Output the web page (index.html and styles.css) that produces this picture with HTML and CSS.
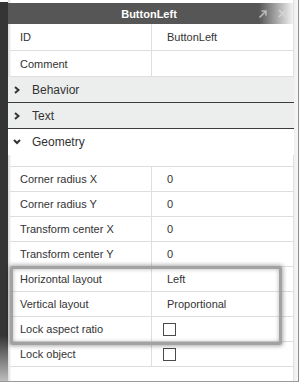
FILE: index.html
```html
<!DOCTYPE html>
<html lang="en">

<head>
    <meta charset="UTF-8">
    <title>ButtonLeft</title>
    <link rel="stylesheet" href="styles.css">
</head>

<body>
    <div class="window">
        <div class="sidebar"></div>
        <div class="panel">
            <div class="titlebar">
                <span class="title">ButtonLeft</span>
                <span class="title-icons">
                    <svg width="10" height="10" viewBox="0 0 10 10"><path d="M1.5 8.5 L8 2 M3.5 2 H8 V6.5" fill="none" stroke="#c8c8c8" stroke-width="1.6"/></svg>
                    <svg width="9" height="9" viewBox="0 0 9 9"><path d="M1 1 L8 8 M8 1 L1 8" fill="none" stroke="#d8d8d8" stroke-width="1.6"/></svg>
                </span>
            </div>

            <div class="row row-first">
                <div class="cell-name">ID</div>
                <div class="cell-value">ButtonLeft</div>
            </div>
            <div class="row">
                <div class="cell-name">Comment</div>
                <div class="cell-value"></div>
            </div>

            <div class="section">
                <svg class="chev" width="6" height="8" viewBox="0 0 6 8"><path d="M1 1 L4.5 4 L1 7" fill="none" stroke="#333" stroke-width="2"/></svg>
                Behavior
            </div>
            <div class="section">
                <svg class="chev" width="6" height="8" viewBox="0 0 6 8"><path d="M1 1 L4.5 4 L1 7" fill="none" stroke="#333" stroke-width="2"/></svg>
                Text
            </div>
            <div class="section open">
                <svg class="chev" width="8" height="6" viewBox="0 0 8 6"><path d="M1 1 L4 4 L7 1" fill="none" stroke="#333" stroke-width="2"/></svg>
                Geometry
            </div>

            <div class="props">
                <div class="row">
                    <div class="cell-name">Corner radius X</div>
                    <div class="cell-value">0</div>
                </div>
                <div class="row">
                    <div class="cell-name">Corner radius Y</div>
                    <div class="cell-value">0</div>
                </div>
                <div class="row">
                    <div class="cell-name">Transform center X</div>
                    <div class="cell-value">0</div>
                </div>
                <div class="row">
                    <div class="cell-name">Transform center Y</div>
                    <div class="cell-value">0</div>
                </div>
                <div class="row">
                    <div class="cell-name">Horizontal layout</div>
                    <div class="cell-value">Left</div>
                </div>
                <div class="row">
                    <div class="cell-name">Vertical layout</div>
                    <div class="cell-value">Proportional</div>
                </div>
                <div class="row">
                    <div class="cell-name">Lock aspect ratio</div>
                    <div class="cell-value check-cell"><span class="checkbox"></span></div>
                </div>
                <div class="row">
                    <div class="cell-name">Lock object</div>
                    <div class="cell-value check-cell"><span class="checkbox"></span></div>
                </div>
                <!-- marco de resaltado -->
                <div class="highlight"></div>
            </div>
        </div>
        <div class="edge"></div>
    </div>
</body>

</html>
```

FILE: styles.css
```css
body {
    margin: 0;
    background: #fff;
    font-family: "Liberation Sans", Arial, sans-serif;
    font-size: 11px;
    color: #333;
}

.window {
    display: flex;
    width: 298px;
    height: 381px;
    border-right: 1px solid #8c8c8c;
    border-bottom: 1px solid #9a9a9a;
}

.sidebar {
    width: 8px;
    margin-top: 2px;
    background: linear-gradient(to bottom, #353535 0%, #353535 88%, #bdbdbd 100%);
}

.panel {
    flex: 1;
    display: flex;
    flex-direction: column;
    padding-top: 3px;
    border-right: 1px solid #e2e2e2;
    box-shadow: inset 3px 0 2px -1px rgba(0, 0, 0, 0.12);
}

.titlebar {
    height: 21px;
    display: flex;
    align-items: center;
    justify-content: center;
    position: relative;
    background: linear-gradient(to right, #565656 0%, #565656 88%, #f2f2f2 100%);
}

.title {
    color: #fff;
    font-weight: bold;
    font-size: 11px;
    margin-left: -3px;
}

.title-icons {
    position: absolute;
    right: 6px;
    top: 6px;
    display: flex;
    gap: 10px;
    opacity: 0.85;
}

.row {
    display: flex;
    height: 25px;
    border-bottom: 1px solid #dedede;
    margin-left: 2px;
}

.row-first {
    height: 26px;
}

.cell-name {
    width: 131px;
    padding-left: 10px;
    border-right: 1px solid #dedede;
    display: flex;
    align-items: center;
}

.cell-value {
    flex: 1;
    padding-left: 15px;
    display: flex;
    align-items: center;
}

.check-cell {
    padding-left: 11px;
}

.checkbox {
    width: 11px;
    height: 11px;
    border: 1px solid #4a4a4a;
    background: #fff;
}

.section {
    height: 25px;
    display: flex;
    align-items: center;
    background: #eceeee;
    border-bottom: 1px solid #3c3c3c;
    font-size: 12px;
    padding-left: 6px;
    margin-right: -1px;
}

.chev {
    margin-right: 12px;
}

.section.open {
    background: #fff;
    border-bottom: none;
    height: 26px;
    margin-bottom: 11px;
    padding-left: 5px;
}

.section.open .chev {
    margin-right: 11px;
}

.props {
    position: relative;
    border-top: 1px solid #dedede;
    margin-left: 2px;
}

.props .row {
    margin-left: 0;
    height: 24px;
}

.highlight {
    position: absolute;
    left: 0;
    top: 99px;
    width: 266px;
    height: 73px;
    border: 3px solid #a2a2a2;
    border-radius: 2px;
    box-shadow: 0 0 4px 1px rgba(0, 0, 0, 0.35), inset 0 0 4px rgba(0, 0, 0, 0.3);
}

.edge {
    width: 4px;
    background: linear-gradient(to right, #efefef, #f7f7f7);
}
```
